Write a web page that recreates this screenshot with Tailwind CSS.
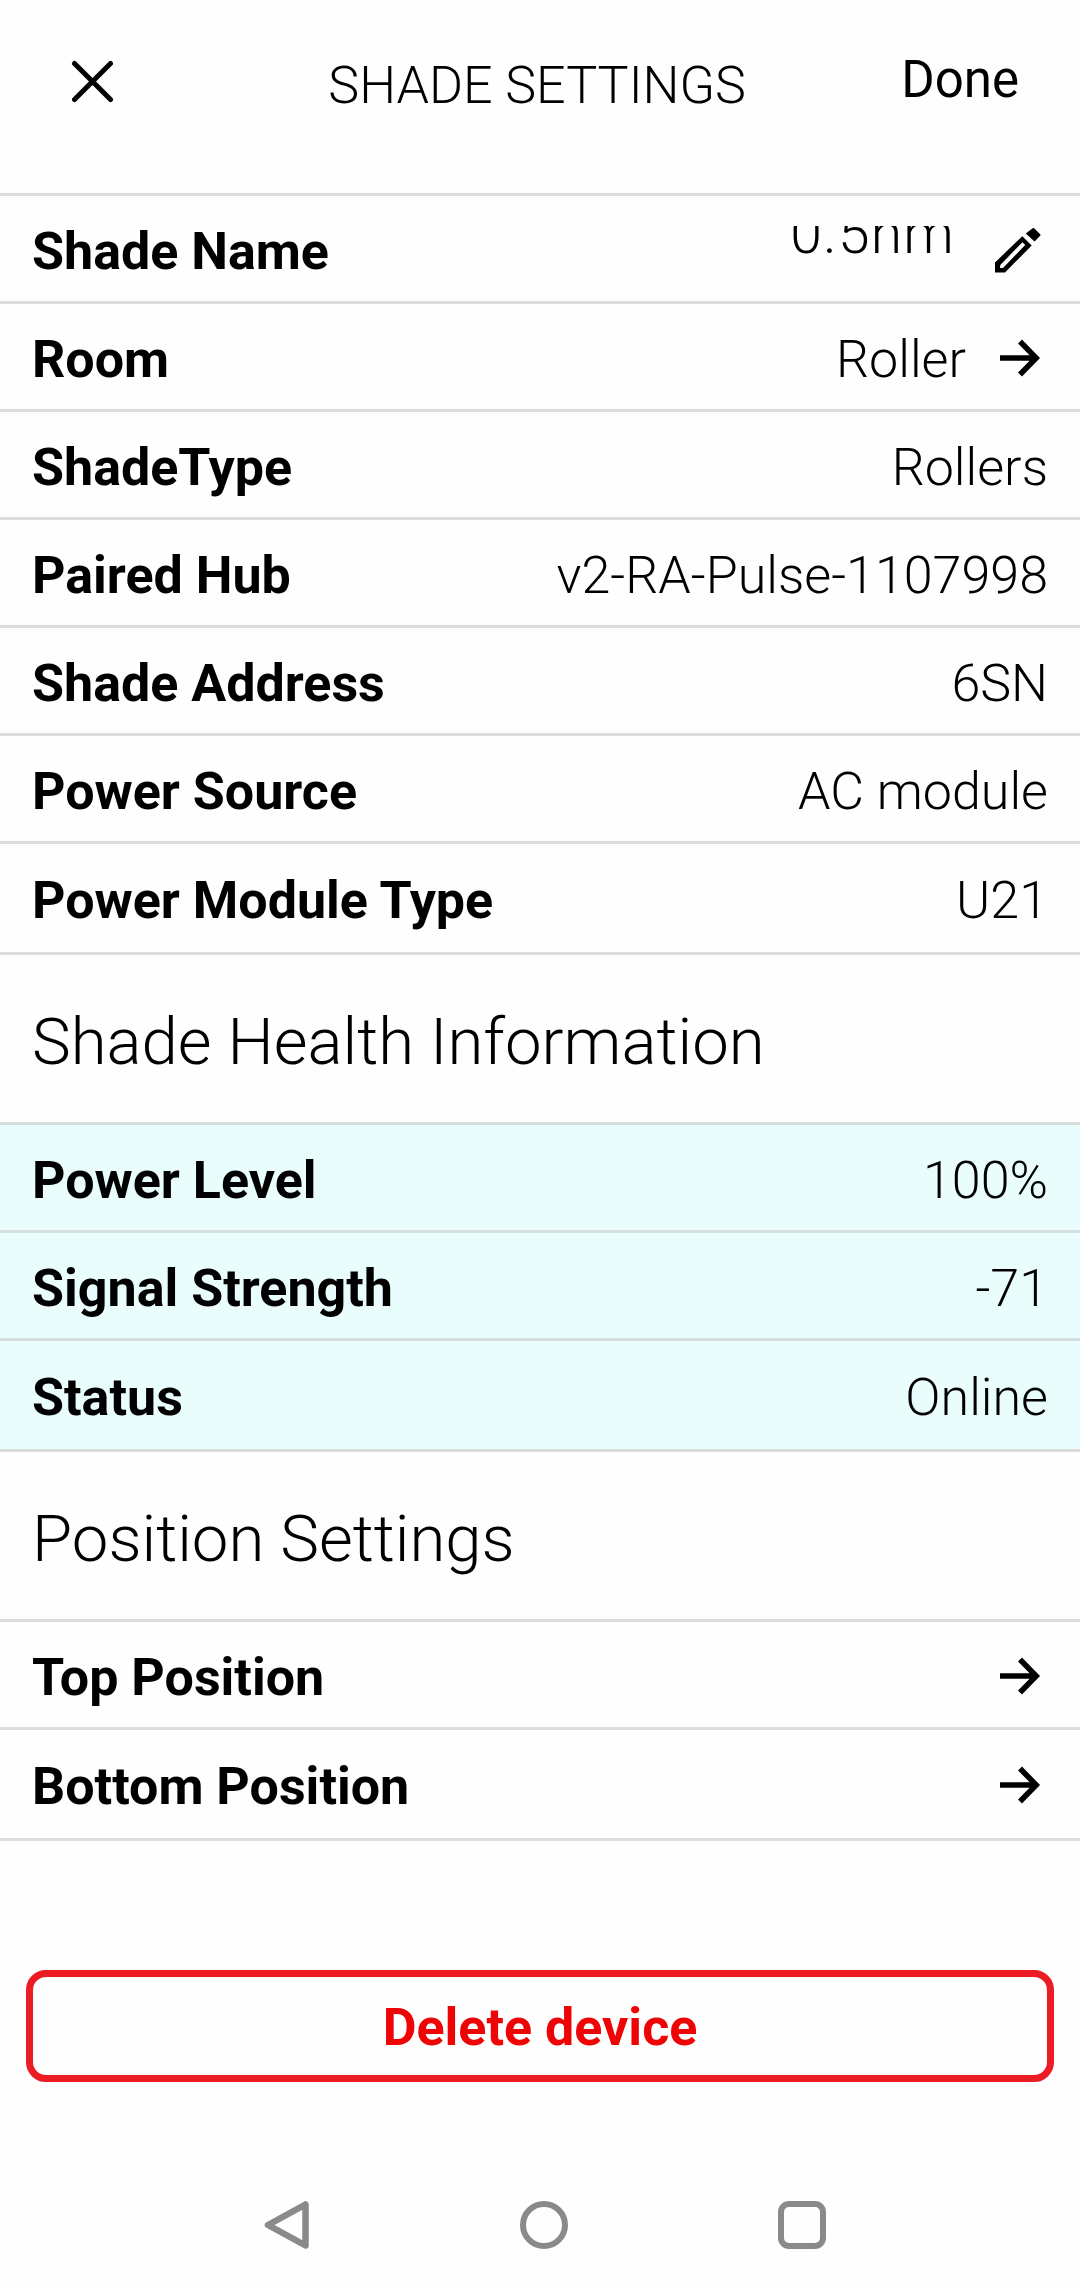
<!DOCTYPE html>
<html lang="en">
<head>
  <meta charset="UTF-8">
  <meta name="viewport" content="width=device-width, initial-scale=1.0">
  <title>Shade Settings</title>
  <script src="https://cdn.jsdelivr.net/npm/@tailwindcss/browser@4"></script>
</head>
<body class="bg-[#fefefe] text-black font-['Roboto',sans-serif] text-[52px] leading-none">
  <div class="w-[1080px] h-[2290px] flex flex-col overflow-hidden">

    <!-- Header -->
    <header class="h-[193px] shrink-0 flex items-start justify-between pl-[71px] pr-[61px] pt-[54px]">
      <button class="mt-1.5" aria-label="Close">
        <svg class="w-[43px] h-[43px]" viewBox="0 0 43 43" fill="none" stroke="#000" stroke-width="5" stroke-linecap="round">
          <path d="M3.5 3.5L39.5 39.5M39.5 3.5L3.5 39.5"/>
        </svg>
      </button>
      <h1 class="font-light mt-1.5 ml-[59px]">SHADE SETTINGS</h1>
      <button class="text-[51px] leading-none">Done</button>
    </header>

    <!-- Device details -->
    <section>
      <div class="flex items-center justify-between h-[108px] border-t-3 border-[#dcdcdc] px-8">
        <span class="font-bold pt-1.5">Shade Name</span>
        <div class="flex items-center gap-[33px]">
          <!-- Name field is scrolled, its top is cut off -->
          <div class="h-[45px] w-[180px] overflow-hidden flex items-start justify-end">
            <span class="font-light text-[57px] leading-none tracking-[1.2px] -mt-[21px]">0.5nm</span>
          </div>
          <svg class="w-[60px] h-[60px]" viewBox="0 0 60 60" fill-rule="evenodd">
            <path d="M7 53.5V43.5L34.3 17.2L43.7 26.5L17 53.5ZM12 48.9H15L37.2 26L34.5 23.2L12.3 45.9Z"/>
            <path d="M44.6 9.2Q45.4 8.6 46.2 9.2L52.2 15.2Q52.9 16 52.2 16.8L46.5 22.5L37.8 14.4Z"/>
          </svg>
        </div>
      </div>
      <div class="flex items-center justify-between h-[108px] border-t-3 border-[#dcdcdc] px-8">
        <span class="font-bold pt-1.5">Room</span>
        <div class="flex items-center gap-[22px]">
          <span class="font-light pt-1.5">Roller</span>
          <svg class="w-[60px] h-[60px] mt-0.5" viewBox="0 0 60 60" fill="none" stroke="#000" stroke-width="5.5"><path d="M12 30H48M32 13.5L48.2 30L32 46.5"/></svg>
        </div>
      </div>
      <div class="flex items-center justify-between h-[108px] border-t-3 border-[#dcdcdc] px-8">
        <span class="font-bold pt-1.5">ShadeType</span>
        <span class="font-light pt-1.5">Rollers</span>
      </div>
      <div class="flex items-center justify-between h-[108px] border-t-3 border-[#dcdcdc] px-8">
        <span class="font-bold pt-1.5">Paired Hub</span>
        <span class="font-light pt-1.5">v2-RA-Pulse-1107998</span>
      </div>
      <div class="flex items-center justify-between h-[108px] border-t-3 border-[#dcdcdc] px-8">
        <span class="font-bold pt-1.5">Shade Address</span>
        <span class="font-light pt-1.5">6SN</span>
      </div>
      <div class="flex items-center justify-between h-[108px] border-t-3 border-[#dcdcdc] px-8">
        <span class="font-bold pt-1.5">Power Source</span>
        <span class="font-light pt-1.5">AC module</span>
      </div>
      <div class="flex items-center justify-between h-[114px] border-y-3 border-[#dcdcdc] px-8">
        <span class="font-bold pt-[5px]">Power Module Type</span>
        <span class="font-light pt-[5px]">U21</span>
      </div>
    </section>

    <!-- Health -->
    <h2 class="h-[167px] shrink-0 flex items-center px-8 pt-1.5 text-[65.3px] font-light">Shade Health Information</h2>
    <section class="bg-[#e9fdfd]">
      <div class="flex items-center justify-between h-[108px] border-t-3 border-[#d6dfdf] px-8">
        <span class="font-bold pt-1.5">Power Level</span>
        <span class="font-light pt-1.5">100%</span>
      </div>
      <div class="flex items-center justify-between h-[108px] border-t-3 border-[#d6dfdf] px-8">
        <span class="font-bold pt-1.5">Signal Strength</span>
        <span class="font-light pt-1.5">-71</span>
      </div>
      <div class="flex items-center justify-between h-[114px] border-y-3 border-t-[#d6dfdf] border-b-[#dcdcdc] px-8">
        <span class="font-bold pt-[5px]">Status</span>
        <span class="font-light pt-[5px]">Online</span>
      </div>
    </section>

    <!-- Positions -->
    <h2 class="h-[167px] shrink-0 flex items-center px-8 pt-1.5 text-[65.3px] font-light">Position Settings</h2>
    <section>
      <div class="flex items-center justify-between h-[108px] border-t-3 border-[#dcdcdc] px-8">
        <span class="font-bold pt-1.5">Top Position</span>
        <svg class="w-[60px] h-[60px] mt-0.5" viewBox="0 0 60 60" fill="none" stroke="#000" stroke-width="5.5"><path d="M12 30H48M32 13.5L48.2 30L32 46.5"/></svg>
      </div>
      <div class="flex items-center justify-between h-[114px] border-y-3 border-[#dcdcdc] px-8">
        <span class="font-bold pt-[5px]">Bottom Position</span>
        <svg class="w-[60px] h-[60px] mt-px" viewBox="0 0 60 60" fill="none" stroke="#000" stroke-width="5.5"><path d="M12 30H48M32 13.5L48.2 30L32 46.5"/></svg>
      </div>
    </section>

    <button class="mt-[129px] mx-[26px] h-[112px] shrink-0 border-7 border-[#ec1c24] rounded-[20px] pt-[3px] text-[#ee0404] font-bold">Delete device</button>

    <!-- Android navigation bar -->
    <nav class="mt-[117px] flex items-center pl-[263px]">
      <svg class="w-[48px] h-[52px]" viewBox="0 0 48 52" fill="none" stroke="#8a8a8a" stroke-width="6.5" stroke-linejoin="round"><path d="M42.5 5.5V46.5L5 26z"/></svg>
      <div class="ml-[209px] size-[48px] border-[6.5px] border-[#8a8a8a] rounded-full"></div>
      <div class="ml-[210px] size-[48px] border-[6.5px] border-[#8a8a8a] rounded-[11px]"></div>
    </nav>
  </div>
</body>
</html>
